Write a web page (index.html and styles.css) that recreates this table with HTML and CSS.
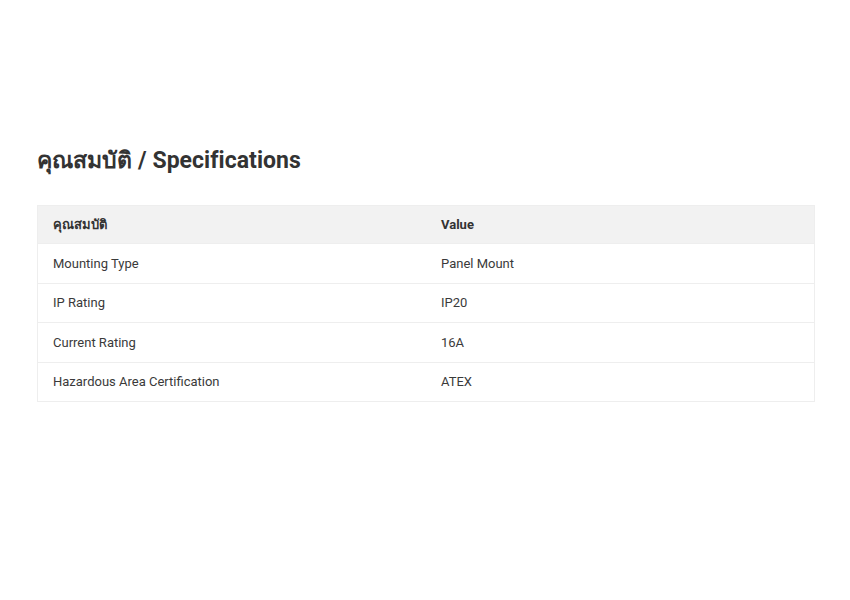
FILE: index.html
```html
<!DOCTYPE html>
<html lang="th">
<head>
<meta charset="utf-8">
<title>Specifications</title>
<link rel="stylesheet" href="styles.css">
</head>
<body>
<section class="specs">
  <h2 class="specs-title">คุณสมบัติ / Specifications</h2>
  <table class="specs-table">
    <thead>
      <tr><th>คุณสมบัติ</th><th>Value</th></tr>
    </thead>
    <tbody>
      <tr><td>Mounting Type</td><td>Panel Mount</td></tr>
      <tr><td>IP Rating</td><td>IP20</td></tr>
      <tr><td>Current Rating</td><td>16A</td></tr>
      <tr><td>Hazardous Area Certification</td><td>ATEX</td></tr>
    </tbody>
  </table>
</section>
</body>
</html>
```
FILE: styles.css
```css
html, body {
  margin: 0;
  padding: 0;
  background: #ffffff;
}
body {
  font-family: Roboto, "Noto Sans", "DejaVu Sans", sans-serif;
  color: #333333;
}
.specs {
  padding: 147px 35px 0 37px;
}
.specs-title {
  margin: 0 0 30px 0;
  font-size: 23px;
  line-height: 28px;
  font-weight: 700;
  letter-spacing: 0.05px;
  color: #333333;
}
.specs-table {
  width: 100%;
  border-collapse: collapse;
  border: 1px solid #eeeeee;
  font-size: 13px;
  table-layout: fixed;
}
.specs-table th,
.specs-table td {
  text-align: left;
  padding: 11.75px 15px;
  line-height: 15px;
  width: 50%;
}
.specs-table th {
  background: #f2f2f2;
  font-weight: 700;
  font-size: 13px;
  padding-top: 11px;
  padding-bottom: 11px;
}
.specs-table td {
  border-top: 1px solid #eeeeee;
  color: #3a3a3a;
}
```
